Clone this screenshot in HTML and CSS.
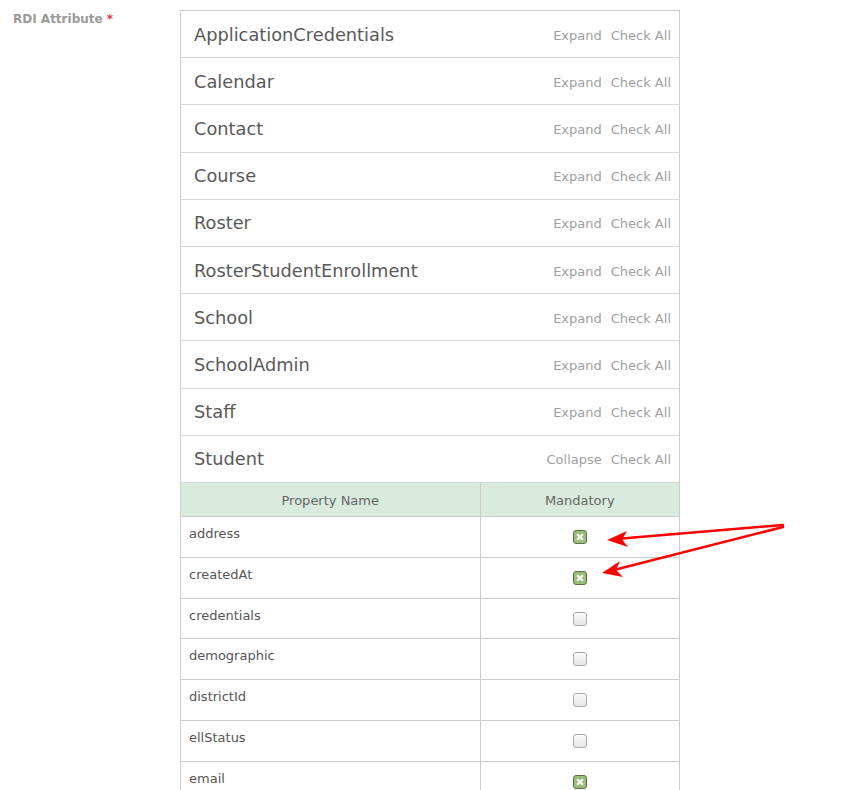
FILE: index.html
```html
<!DOCTYPE html>
<html lang="en">

<head>
  <meta charset='utf-8'>
  <title>RDI Attribute</title>
  <link rel="stylesheet" href="styles.css">
</head>

<body>
  <div class='field'>
    <label class='field-label'>RDI Attribute <span class='req'>*</span></label>
    <div class='groups'>
      <div class='group'><span class='gname'>ApplicationCredentials</span><span class='acts'><a>Expand</a><a>Check All</a></span></div>
      <div class='group'><span class='gname'>Calendar</span><span class='acts'><a>Expand</a><a>Check All</a></span></div>
      <div class='group'><span class='gname'>Contact</span><span class='acts'><a>Expand</a><a>Check All</a></span></div>
      <div class='group'><span class='gname'>Course</span><span class='acts'><a>Expand</a><a>Check All</a></span></div>
      <div class='group'><span class='gname'>Roster</span><span class='acts'><a>Expand</a><a>Check All</a></span></div>
      <div class='group'><span class='gname'>RosterStudentEnrollment</span><span class='acts'><a>Expand</a><a>Check All</a></span></div>
      <div class='group'><span class='gname'>School</span><span class='acts'><a>Expand</a><a>Check All</a></span></div>
      <div class='group'><span class='gname'>SchoolAdmin</span><span class='acts'><a>Expand</a><a>Check All</a></span></div>
      <div class='group'><span class='gname'>Staff</span><span class='acts'><a>Expand</a><a>Check All</a></span></div>
      <div class='group'><span class='gname'>Student</span><span class='acts'><a>Collapse</a><a>Check All</a></span></div>
      <table class='props'>
        <thead>
          <tr><th class='c-name'>Property Name</th><th>Mandatory</th></tr>
        </thead>
        <tbody>
          <tr><td>address</td><td class='c-box'><span class='box on'></span></td></tr>
          <tr><td>createdAt</td><td class='c-box'><span class='box on'></span></td></tr>
          <tr><td>credentials</td><td class='c-box'><span class='box'></span></td></tr>
          <tr><td>demographic</td><td class='c-box'><span class='box'></span></td></tr>
          <tr><td>districtId</td><td class='c-box'><span class='box'></span></td></tr>
          <tr><td>ellStatus</td><td class='c-box'><span class='box'></span></td></tr>
          <tr><td>email</td><td class='c-box'><span class='box on'></span></td></tr>
        </tbody>
      </table>
    </div>
  </div>

  <!-- annotation arrows -->
  <svg class='arrows' width='849' height='790' viewBox='0 0 849 790'>
    <g stroke='#f00' stroke-width='2.5' fill='none' stroke-linecap='round'>
      <line x1='783' y1='525' x2='616' y2='539' />
      <line x1='783' y1='527' x2='610' y2='571' />
    </g>
    <g fill='#f00'>
      <polygon points='607,540 627,531 622,539.5 628,547' />
      <polygon points='602,573 620,561 616,570 623,577' />
    </g>
  </svg>
</body>

</html>
```

FILE: styles.css
```css
* {
  margin: 0;
  padding: 0;
  box-sizing: border-box;
}

body {
  font-family: "DejaVu Sans", Verdana, sans-serif;
  color: #555;
  background: #fff;
  width: 849px;
  height: 790px;
  overflow: hidden;
}

.field {
  display: flex;
  padding-top: 10px;
}

.field-label {
  width: 180px;
  padding: 2px 0 0 13px;
  font-size: 12px;
  font-weight: bold;
  color: #999;
}

.req {
  color: #e4314b;
}

.groups {
  width: 500px;
  border: 1px solid #ccc;
  border-bottom: none;
}

.group {
  display: flex;
  justify-content: space-between;
  align-items: center;
  height: 47.2px;
  padding: 0 8px 0 13px;
  border-bottom: 1px solid #d8d8d8;
}

.gname {
  font-size: 17.8px;
  color: #595959;
}

.acts a {
  font-size: 13px;
  color: #a0a0a0;
  margin-left: 9px;
  cursor: pointer;
}

.props {
  width: 100%;
  border-collapse: collapse;
  font-size: 13px;
}

.props th {
  background: #d9ebdf;
  color: #666;
  font-weight: normal;
  height: 34px;
  padding-top: 1px;
  text-align: center;
  border-bottom: 1px solid #ccc;
}

.props th.c-name {
  width: 299px;
  border-right: 1px solid #ccc;
}

.props td {
  height: 40.7px;
  vertical-align: top;
  padding: 9px 8px;
  border-bottom: 1px solid #ccc;
  color: #555;
}

.props td:first-child {
  border-right: 1px solid #ccc;
}

.props td.c-box {
  text-align: center;
  padding-top: 13px;
}

.box {
  display: inline-block;
  width: 14px;
  height: 14px;
  border: 1px solid #aaa;
  border-radius: 3px;
  background: linear-gradient(#fafafa, #e6e6e6);
  position: relative;
  vertical-align: top;
}

.box.on {
  border-color: #5e6e4e;
  background: #9cbd7a;
}

.box.on::before,
.box.on::after {
  content: '';
  position: absolute;
  left: 2px;
  top: 5px;
  width: 8px;
  height: 2px;
  background: #fff;
  transform: rotate(45deg);
}

.box.on::after {
  transform: rotate(-45deg);
}

.arrows {
  position: absolute;
  top: 0;
  left: 0;
  pointer-events: none;
}
```
